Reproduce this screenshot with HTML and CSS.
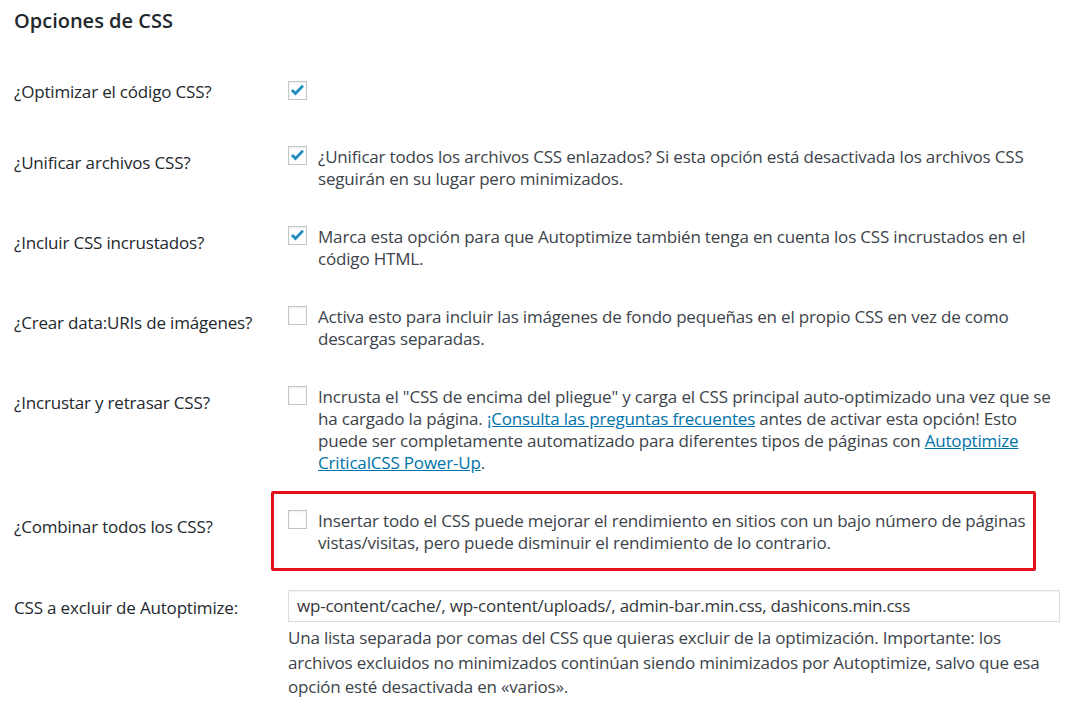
FILE: index.html
```html
<!DOCTYPE html>
<html lang="es">
<head>
<meta charset="utf-8">
<title>Opciones de CSS</title>
<link rel="stylesheet" href="styles.css">
</head>
<body>
<div class="page">
  <h2 class="title">Opciones de CSS</h2>

  <div class="row row-first">
    <div class="label">¿Optimizar el código CSS?</div>
    <div class="field">
      <label class="opt"><span class="cb checked"><svg viewBox="0 0 20 20"><path d="M3.4 9.4 L7.6 13.6 L16.4 4.4"/></svg></span></label>
    </div>
  </div>

  <div class="row">
    <div class="label">¿Unificar archivos CSS?</div>
    <div class="field">
      <label class="opt"><span class="cb checked"><svg viewBox="0 0 20 20"><path d="M3.4 9.4 L7.6 13.6 L16.4 4.4"/></svg></span><span class="txt">¿Unificar todos los archivos CSS enlazados? Si esta opción está desactivada los archivos CSS seguirán en su lugar pero minimizados.</span></label>
    </div>
  </div>

  <div class="row">
    <div class="label">¿Incluir CSS incrustados?</div>
    <div class="field">
      <label class="opt"><span class="cb checked"><svg viewBox="0 0 20 20"><path d="M3.4 9.4 L7.6 13.6 L16.4 4.4"/></svg></span><span class="txt">Marca esta opción para que Autoptimize también tenga en cuenta los CSS incrustados en el código HTML.</span></label>
    </div>
  </div>

  <div class="row">
    <div class="label">¿Crear data:URIs de imágenes?</div>
    <div class="field">
      <label class="opt"><span class="cb"></span><span class="txt">Activa esto para incluir las imágenes de fondo pequeñas en el propio CSS en vez de como descargas separadas.</span></label>
    </div>
  </div>

  <div class="row">
    <div class="label">¿Incrustar y retrasar CSS?</div>
    <div class="field">
      <label class="opt"><span class="cb"></span><span class="txt">Incrusta el "CSS de encima del pliegue" y carga el CSS principal auto-optimizado una vez que se ha cargado la página. <a href="#">¡Consulta las preguntas frecuentes</a> antes de activar esta opción! Esto puede ser completamente automatizado para diferentes tipos de páginas con <a href="#">Autoptimize CriticalCSS Power-Up</a>.</span></label>
    </div>
  </div>

  <div class="row row-mark">
    <div class="label">¿Combinar todos los CSS?</div>
    <div class="field highlight">
      <label class="opt"><span class="cb"></span><span class="txt">Insertar todo el CSS puede mejorar el rendimiento en sitios con un bajo número de páginas vistas/visitas, pero puede disminuir el rendimiento de lo contrario.</span></label>
    </div>
  </div>

  <div class="row row-last">
    <div class="label">CSS a excluir de Autoptimize:</div>
    <div class="field">
      <div class="input">wp-content/cache/, wp-content/uploads/, admin-bar.min.css, dashicons.min.css</div>
      <p class="desc">Una lista separada por comas del CSS que quieras excluir de la optimización. Importante: los archivos excluidos no minimizados continúan siendo minimizados por Autoptimize, salvo que esa opción esté desactivada en «varios».</p>
    </div>
  </div>
</div>
</body>
</html>
```

FILE: styles.css
```css
html, body {
  margin: 0;
  background: #ffffff;
}

body {
  font-family: "Open Sans", "Noto Sans", sans-serif;
  font-size: 17px;
  letter-spacing: -0.18px;
  color: #23282d;
}

.page {
  padding: 0 18px 0 14px;
}

.title {
  margin: 0;
  padding-top: 8px;
  font-size: 20px;
  line-height: 26px;
  font-weight: 600;
  letter-spacing: 0;
  color: #23282d;
}

.row {
  display: grid;
  grid-template-columns: 274px 1fr;
}

.row-first {
  margin-top: 29px;
}

.label {
  padding-top: 25px;
  line-height: 22px;
  color: #23282d;
}

.field {
  padding: 19px 0 17px;
  line-height: 22px;
  color: #3c434a;
}

.row-first .label {
  padding-top: 18px;
}

.row-first .field {
  padding-top: 18px;
  padding-bottom: 27px;
}

.opt {
  display: flex;
  align-items: flex-start;
  gap: 11px;
}

.cb {
  flex: none;
  box-sizing: border-box;
  width: 19px;
  height: 19px;
  margin-top: 0;
  border: 1px solid #c3c6c9;
  background: #fff;
  box-shadow: inset 0 1px 2px rgba(0, 0, 0, 0.08);
  display: flex;
  align-items: center;
  justify-content: center;
}

.cb svg {
  width: 17px;
  height: 17px;
}

.cb svg path {
  fill: none;
  stroke: #1e8cbe;
  stroke-width: 3.2;
  stroke-linejoin: miter;
}

a {
  color: #0073aa;
  text-decoration: underline;
}

.highlight {
  margin: 0 24px 0 -17px;
  border: 3px solid #e3101c;
  border-radius: 2px;
  padding: 16px 0 14px 14px;
}

.row-last .label {
  padding-top: 26px;
}

.row-last .field {
  padding-top: 19px;
}

.input {
  box-sizing: border-box;
  height: 32px;
  line-height: 30px;
  border: 1px solid #dddddd;
  box-shadow: inset 0 1px 2px rgba(0, 0, 0, 0.06);
  padding: 0 8px;
  color: #32373c;
  letter-spacing: -0.22px;
}

.desc {
  margin: 4px 0 0;
  line-height: 24.5px;
  color: #3c434a;
  letter-spacing: -0.2px;
}
```
